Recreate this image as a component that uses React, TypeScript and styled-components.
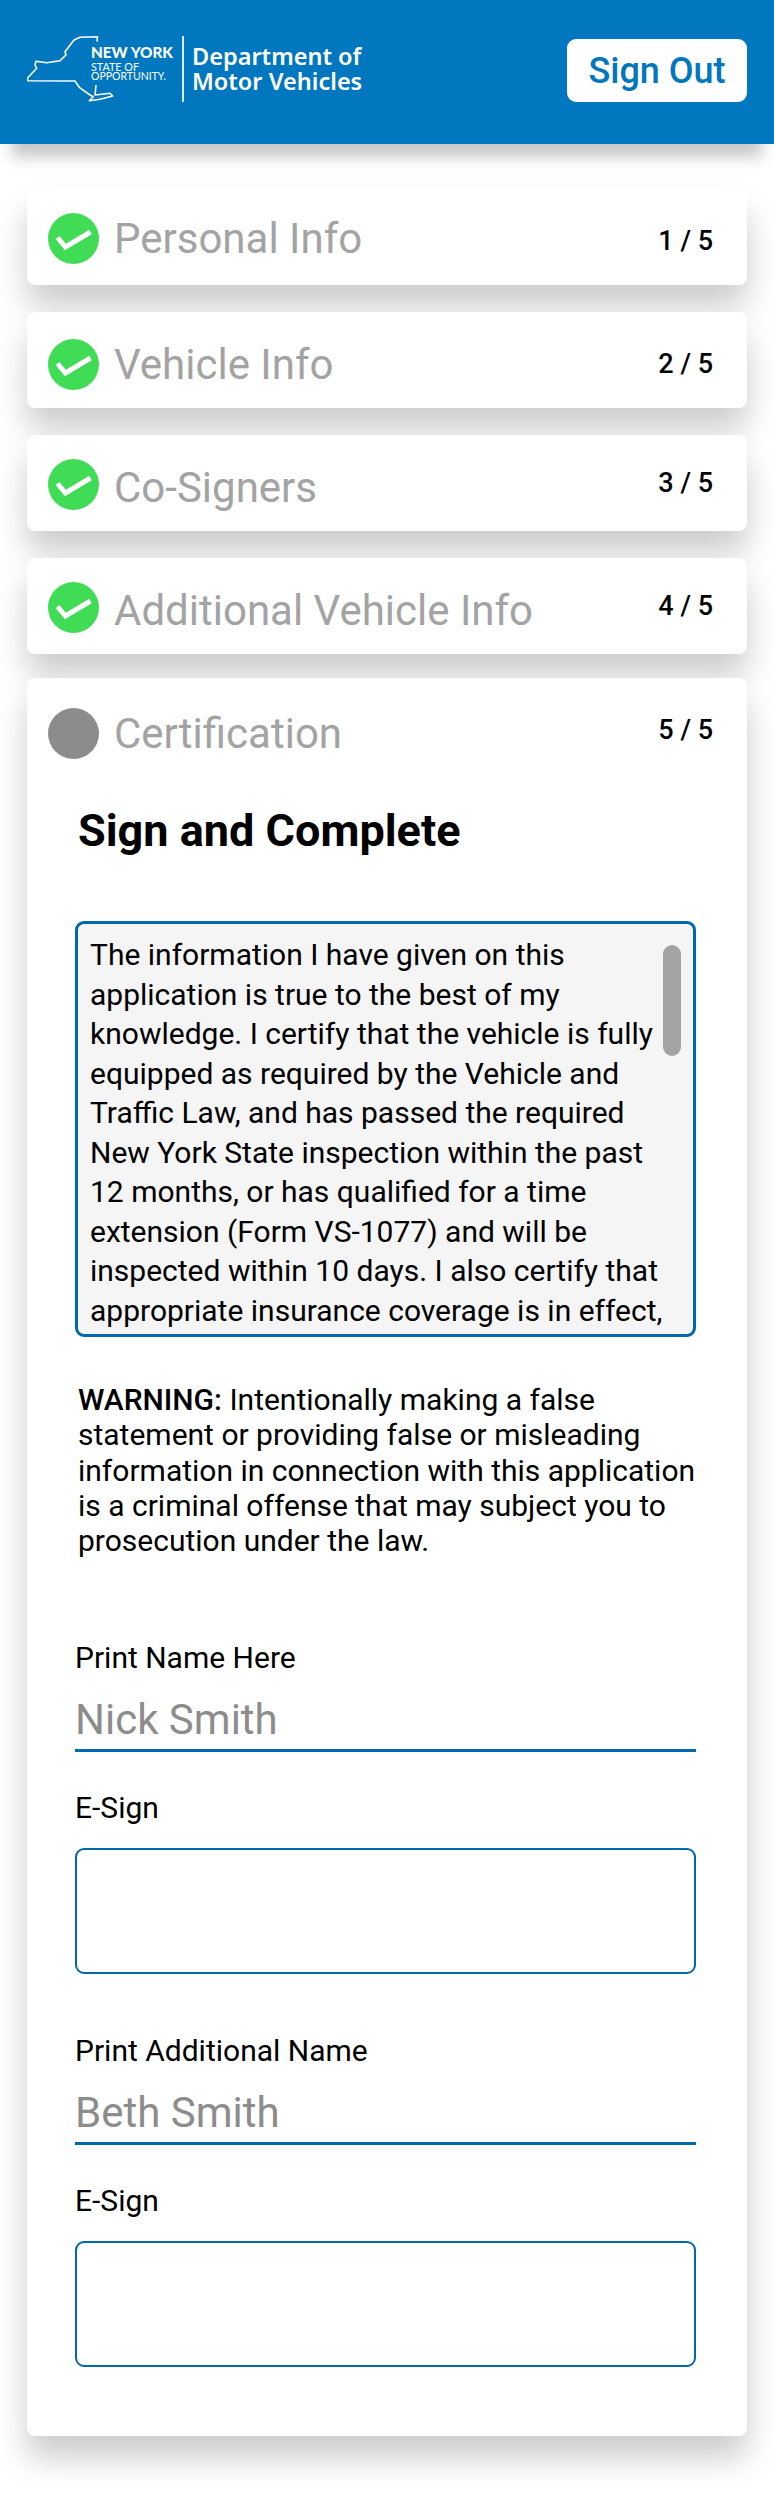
import React from 'react';
import styled, { createGlobalStyle } from 'styled-components';

const GlobalStyle = createGlobalStyle`
    html, body {
        margin: 0;
        padding: 0;
        background: #fff;
        font-family: Roboto, "Liberation Sans", sans-serif;
    }
`;

const Page = styled.div`
    width: 774px;
    height: 2499px;
    overflow: hidden;
    background: #fff;
`;

const Header = styled.header`
    height: 144px;
    background: #0077be;
    box-shadow: 0 25px 14px -12px rgba(0, 0, 0, 0.22);
    display: flex;
    align-items: center;
    justify-content: space-between;
    padding: 0 27px;
`;

const Brand = styled.div`
    display: flex;
    align-items: center;
`;

const Divider = styled.div`
    width: 2px;
    height: 66px;
    background: #d9ecf7;
    margin: 0 8px 6px 8px;
`;

const BrandName = styled.div`
    font-family: "Noto Sans", "Open Sans", sans-serif;
    font-weight: 600;
    font-size: 23.5px;
    line-height: 25px;
    color: #fff;
    margin-bottom: 7px;
`;

const SignOut = styled.button`
    width: 180px;
    height: 63px;
    border: 0;
    border-radius: 9px;
    background: #fff;
    color: #0077be;
    font-family: Roboto, sans-serif;
    font-size: 36px;
    font-weight: 500;
    padding: 0;
    margin-bottom: 3px;
`;

const Steps = styled.main`
    display: flex;
    flex-direction: column;
    padding: 45px 27px 0;
`;

const Card = styled.section<{ $gap: number }>`
    margin-bottom: ${(p) => p.$gap}px;
    background: #fff;
    border-radius: 8px;
    box-shadow: 0 22px 32px rgba(0, 0, 0, 0.2);
`;

const StepRow = styled.div<{ $top: number }>`
    height: 96px;
    box-sizing: border-box;
    display: flex;
    align-items: flex-start;
    padding: ${(p) => p.$top}px 34px 0 21px;
`;

const Circle = styled.div<{ $done?: boolean }>`
    width: 51px;
    height: 51px;
    border-radius: 50%;
    background: ${(p) => (p.$done ? '#41dc55' : '#8c8c8c')};
    flex: none;
    display: flex;
`;

const StepTitle = styled.div<{ $shift: number }>`
    flex: 1;
    margin: ${(p) => p.$shift}px 0 0 15px;
    font-size: 42px;
    line-height: 50px;
    color: #a3a3a3;
`;

const StepCount = styled.div<{ $shift: number }>`
    margin-top: ${(p) => p.$shift}px;
    font-size: 27px;
    line-height: 32px;
    font-weight: 500;
    color: #000;
`;

const Body = styled.div`
    padding: 0 51px 69px 48px;
`;

const Heading = styled.h2`
    margin: 29px 0 62px 3px;
    font-size: 45px;
    line-height: 56px;
    font-weight: 700;
    color: #000;
`;

const TermsBox = styled.div`
    position: relative;
    height: 416px;
    box-sizing: border-box;
    overflow: hidden;
    border: 3px solid #0069aa;
    border-radius: 9px;
    background: #f5f5f5;
    padding: 11px 30px 0 12px;
    font-size: 30px;
    line-height: 39.5px;
    color: #000;
`;

const ScrollThumb = styled.div`
    position: absolute;
    top: 21px;
    right: 12px;
    width: 18px;
    height: 111px;
    border-radius: 9px;
    background: #a3a3a3;
`;

const Warning = styled.p`
    margin: 45px 0 82px 3px;
    font-size: 30px;
    line-height: 35.25px;
    color: #000;
    b {
        font-weight: 500;
    }
`;

const Label = styled.div<{ $top?: number }>`
    margin-top: ${(p) => p.$top ?? 0}px;
    font-size: 30px;
    line-height: 36px;
    color: #000;
`;

const NameField = styled.div`
    margin-top: 17px;
    height: 56px;
    border-bottom: 3px solid #0069aa;
    font-size: 42px;
    line-height: 54px;
    color: #8c8c8c;
`;

const SignBox = styled.div`
    margin-top: 22px;
    height: 126px;
    box-sizing: border-box;
    border: 2px solid #0069aa;
    border-radius: 9px;
    background: #fff;
`;

const Logo = () => (
    <svg width="147" height="96" viewBox="0 0 147 96" fill="none">
        <path
            d="M70 17.700 L70.500 12.700 L53 13.300 L47 16 L38 27.700 L39 31 L33 36.700 L19.700 38.700 L9 37.300 L8 41 L9.700 44.300 L0.300 54.300 L1 56.700 L48 57 L52.300 63.300 L63 71 L66.300 72.700 L62.300 76.700 L73 75.300 L85.700 72 L83 69.300 L68 71 L69 61"
            stroke="#fff"
            strokeWidth="1.600"
            strokeLinejoin="round"
        />
        <text x="64" y="34" fill="#fff" fontFamily="Lato, sans-serif" fontWeight="900" fontSize="15.500" textLength="82" lengthAdjust="spacingAndGlyphs">NEW YORK</text>
        <text x="64" y="47" fill="#fff" fontFamily="Lato, sans-serif" fontSize="11" textLength="48" lengthAdjust="spacingAndGlyphs">STATE OF</text>
        <text x="64" y="56" fill="#fff" fontFamily="Lato, sans-serif" fontSize="11" textLength="75" lengthAdjust="spacingAndGlyphs">OPPORTUNITY.</text>
    </svg>
);

const Check = () => (
    <svg width="51" height="51" viewBox="0 0 51 51" fill="none">
        <path d="M9.500 24.500 L17.500 34 L42.500 19" stroke="#fff" strokeWidth="5" />
    </svg>
);

const done = [
    { title: 'Personal Info', count: '1 / 5', top: 24, shift: 1, countShift: 12, gap: 27 },
    { title: 'Vehicle Info', count: '2 / 5', top: 27, shift: 1, countShift: 9, gap: 27 },
    { title: 'Co-Signers', count: '3 / 5', top: 24, shift: 4, countShift: 8, gap: 27 },
    { title: 'Additional Vehicle Info', count: '4 / 5', top: 24, shift: 4, countShift: 8, gap: 24 },
];

export default function App() {
    return (
        <Page>
            <GlobalStyle />
            <Header>
                <Brand>
                    <Logo />
                    <Divider />
                    <BrandName>
                        Department of
                        <br />
                        Motor Vehicles
                    </BrandName>
                </Brand>
                <SignOut>Sign Out</SignOut>
            </Header>
            <Steps>
                {done.map((step) => (
                    <Card key={step.title} $gap={step.gap}>
                        <StepRow $top={step.top}>
                            <Circle $done>
                                <Check />
                            </Circle>
                            <StepTitle $shift={step.shift}>{step.title}</StepTitle>
                            <StepCount $shift={step.countShift}>{step.count}</StepCount>
                        </StepRow>
                    </Card>
                ))}
                <Card $gap={0}>
                    <StepRow $top={30}>
                        <Circle />
                        <StepTitle $shift={1}>Certification</StepTitle>
                        <StepCount $shift={6}>5 / 5</StepCount>
                    </StepRow>
                    <Body>
                        <Heading>Sign and Complete</Heading>
                        <TermsBox>
                            <ScrollThumb />
                            The information I have given on this application is true to the best of my
                            knowledge. I certify that the vehicle is fully equipped as required by the Vehicle and
                            Traffic Law, and has passed the required New York State inspection within the past
                            12 months, or has qualified for a time extension (Form VS-1077) and will be
                            inspected within 10 days. I also certify that appropriate insurance coverage is in effect,
                        </TermsBox>
                        <Warning>
                            <b>WARNING:</b> Intentionally making a false statement or providing false or misleading
                            information in connection with this application is a criminal offense that may subject you to
                            prosecution under the law.
                        </Warning>
                        <Label>Print Name Here</Label>
                        <NameField>Nick Smith</NameField>
                        <Label $top={38}>E-Sign</Label>
                        <SignBox />
                        <Label $top={59}>Print Additional Name</Label>
                        <NameField>Beth Smith</NameField>
                        <Label $top={38}>E-Sign</Label>
                        <SignBox />
                    </Body>
                </Card>
            </Steps>
        </Page>
    );
}
